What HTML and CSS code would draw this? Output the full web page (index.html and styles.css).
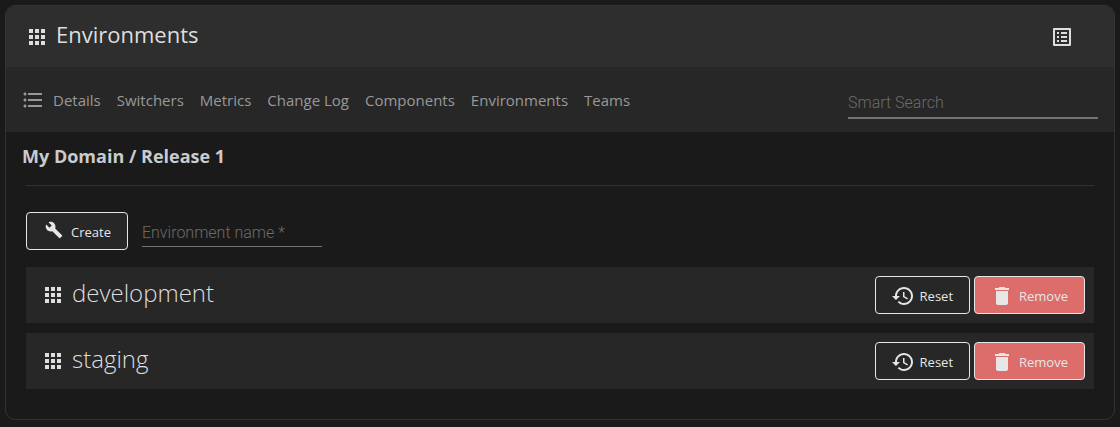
FILE: index.html
```html
<!DOCTYPE html>
<html lang="en">
<head>
<meta charset="utf-8">
<title>Environments</title>
<link rel="stylesheet" href="styles.css">
</head>
<body>
<svg class="sprite" aria-hidden="true">
  <symbol id="apps" viewBox="0 0 24 24"><path d="M4 8h4V4H4v4zm6 12h4v-4h-4v4zm-6 0h4v-4H4v4zm0-6h4v-4H4v4zm6 0h4v-4h-4v4zm6-10v4h4V4h-4zm-6 4h4V4h-4v4zm6 6h4v-4h-4v4zm0 6h4v-4h-4v4z"/></symbol>
  <symbol id="history" viewBox="0 0 24 24"><path d="M13 3c-4.97 0-9 4.03-9 9H1l3.89 3.89.07.14L9 12H6c0-3.87 3.13-7 7-7s7 3.13 7 7-3.13 7-7 7c-1.93 0-3.68-.79-4.94-2.06l-1.42 1.42C8.27 19.99 10.51 21 13 21c4.97 0 9-4.03 9-9s-4.03-9-9-9zm-1 5v5l4.28 2.54.72-1.21-3.5-2.08V8H12z"/></symbol>
  <symbol id="trash" viewBox="0 0 24 24"><path d="M6 19c0 1.1.9 2 2 2h8c1.1 0 2-.9 2-2V7H6v12zM19 4h-3.500l-1-1h-5l-1 1H5v2h14V4z"/></symbol>
</svg>
<main class="card">
  <header class="header">
    <svg class="icon" aria-hidden="true"><use href="#apps"/></svg>
    <h1 class="heading">Environments</h1>
    <button class="icon-button" type="button" aria-label="Show details">
      <svg class="icon" viewBox="0 0 24 24" aria-hidden="true"><path d="M19 5v14H5V5h14m1.100-2H3.900c-.5 0-.9.400-.9.900v16.200c0 .4.400.9.900.9h16.200c.4 0 .9-.5.900-.9V3.900c0-.5-.5-.9-.9-.9zM11 7h6v2h-6V7zm0 4h6v2h-6v-2zm0 4h6v2h-6zM7 7h2v2H7zm0 4h2v2H7zm0 4h2v2H7z"/></svg>
    </button>
  </header>
  <div class="toolbar">
    <nav class="nav">
      <svg class="icon" viewBox="0 0 24 24" aria-hidden="true"><path d="M4 10.500c-.83 0-1.500.67-1.500 1.500s.67 1.500 1.500 1.500 1.500-.67 1.500-1.500-.67-1.500-1.500-1.500zm0-6c-.83 0-1.500.67-1.500 1.500S3.170 7.500 4 7.500 5.500 6.830 5.500 6 4.830 4.500 4 4.500zm0 12c-.83 0-1.500.68-1.500 1.500s.68 1.500 1.500 1.500 1.500-.68 1.500-1.500-.67-1.500-1.500-1.500zM7 19h14v-2H7v2zm0-6h14v-2H7v2zm0-8v2h14V5H7z"/></svg>
      <ul class="links">
        <li><a href="#details">Details</a></li>
        <li><a href="#switchers">Switchers</a></li>
        <li><a href="#metrics">Metrics</a></li>
        <li><a href="#changelog">Change Log</a></li>
        <li><a href="#components">Components</a></li>
        <li><a href="#environments">Environments</a></li>
        <li><a href="#teams">Teams</a></li>
      </ul>
    </nav>
    <input class="field search" type="search" placeholder="Smart Search" aria-label="Smart Search">
  </div>
  <h2 class="path">My Domain / Release 1</h2>
  <section class="content">
    <form class="create">
      <button class="button" type="button">
        <svg class="icon small" viewBox="0 0 24 24" aria-hidden="true"><path d="M22.700 19l-9.100-9.100c.9-2.300.4-5-1.500-6.900-2-2-5-2.400-7.400-1.300L9 6 6 9 1.600 4.700C.4 7.100.9 10.100 2.900 12.100c1.900 1.900 4.600 2.400 6.900 1.500l9.100 9.100c.4.400 1 .4 1.400 0l2.300-2.300c.5-.4.5-1.100.1-1.400z"/></svg>
        Create
      </button>
      <input class="field name" type="text" placeholder="Environment name *" aria-label="Environment name" required>
    </form>
    <ul class="list">
      <li class="row">
        <svg class="icon" aria-hidden="true"><use href="#apps"/></svg>
        <span class="row-name">development</span>
        <button class="button" type="button"><svg class="icon" aria-hidden="true"><use href="#history"/></svg>Reset</button>
        <button class="button danger" type="button"><svg class="icon" aria-hidden="true"><use href="#trash"/></svg>Remove</button>
      </li>
      <li class="row">
        <svg class="icon" aria-hidden="true"><use href="#apps"/></svg>
        <span class="row-name">staging</span>
        <button class="button" type="button"><svg class="icon" aria-hidden="true"><use href="#history"/></svg>Reset</button>
        <button class="button danger" type="button"><svg class="icon" aria-hidden="true"><use href="#trash"/></svg>Remove</button>
      </li>
    </ul>
  </section>
</main>
</body>
</html>
```
FILE: styles.css
```css
* {
  box-sizing: border-box;
}

body {
  margin: 0;
  padding: 5px;
  background: #1a1a1a;
  color: #dedede;
  font-family: "Open Sans", "Noto Sans", sans-serif;
}

.sprite {
  display: none;
}

.icon {
  flex: none;
  width: 24px;
  height: 24px;
  fill: currentColor;
}

.small {
  width: 18px;
  height: 18px;
}

.card {
  overflow: hidden;
  border: 1px solid #333;
  border-radius: 10px;
}

.header {
  display: flex;
  align-items: center;
  gap: 7px;
  height: 61px;
  padding: 0 40px 0 19px;
  background: #2e2e2e;
}

.heading {
  flex: 1;
  margin: 0;
  padding-bottom: 6px;
  font-size: 22px;
  font-weight: 400;
  line-height: 30px;
}

.icon-button {
  display: flex;
  padding: 0;
  border: 0;
  background: none;
  color: inherit;
}

.toolbar {
  display: flex;
  align-items: center;
  justify-content: space-between;
  height: 65px;
  padding: 0 16px 0 15px;
  background: #272727;
}

.nav {
  display: flex;
  align-items: center;
  gap: 8px;
  color: #999;
}

.links {
  display: flex;
  gap: 16px;
  margin: 0;
  padding: 0;
  list-style: none;
}

.links a {
  color: inherit;
  font-size: 15px;
  line-height: 24px;
  text-decoration: none;
}

.field {
  padding: 0;
  border: 0;
  border-radius: 0;
  outline: 0;
  background: none;
  color: #dedede;
  font: 300 16px/24px Roboto, sans-serif;
}

.field::placeholder {
  color: #6c6c6c;
  opacity: 1;
}

.search {
  width: 250px;
  height: 30px;
  margin-top: 8px;
  border-bottom: 2px solid #727272;
  appearance: none;
}

.path {
  margin: 0;
  padding: 11px 16px 0;
  font-size: 18px;
  font-weight: 700;
  line-height: 26px;
  color: #c9cbce;
}

.content {
  margin: 16px 20px 30px;
  border-top: 1px solid #303030;
}

.create {
  display: flex;
  align-items: center;
  gap: 14px;
  padding: 26px 0 17px;
}

.name {
  width: 180px;
  height: 28px;
  margin-top: 3px;
  border-bottom: 1px solid #727272;
}

.button {
  display: flex;
  align-items: center;
  gap: 5px;
  height: 38px;
  padding: 2px 16px 0 15px;
  border: 1px solid #e6e6e6;
  border-radius: 4px;
  background: #272727;
  color: #e6e6e6;
  font: 400 13px/20px "Open Sans", "Noto Sans", sans-serif;
}

.create .button {
  gap: 8px;
  padding: 2px 16px 0 18px;
}

.create .small {
  margin-bottom: 4px;
}

.danger {
  background: #dc6d6b;
}

.list {
  display: grid;
  gap: 10px;
  margin: 0;
  padding: 0;
  list-style: none;
}

.row {
  display: flex;
  align-items: center;
  gap: 4px;
  height: 56px;
  padding: 0 9px 0 15px;
  background: #272727;
}

.row-name {
  flex: 1;
  padding: 0 0 4px 3px;
  font-size: 24px;
  font-weight: 300;
  line-height: 30px;
}
```
